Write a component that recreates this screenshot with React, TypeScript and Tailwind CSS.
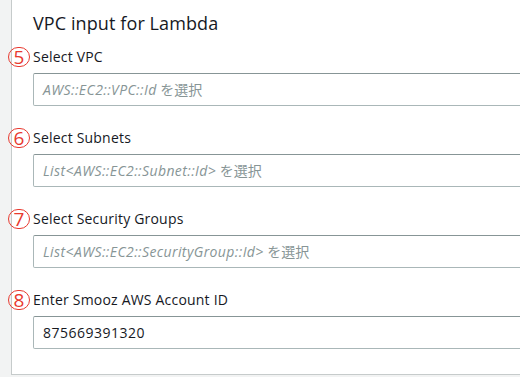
const fields: Array<{
  num: string;
  label: string;
  placeholder?: string;
  value?: string;
}> = [
  { num: "5", label: "Select VPC", placeholder: "AWS::EC2::VPC::Id" },
  {
    num: "6",
    label: "Select Subnets",
    placeholder: "List<AWS::EC2::Subnet::Id>",
  },
  {
    num: "7",
    label: "Select Security Groups",
    placeholder: "List<AWS::EC2::SecurityGroup::Id>",
  },
  { num: "8", label: "Enter Smooz AWS Account ID", value: "875669391320" },
];

export default function App() {
  return (
    <div className="flex h-[377px] w-[520px] overflow-hidden bg-[#f2f3f3] pl-[11px] font-['Open_Sans','Noto_Sans_CJK_JP',sans-serif] text-[#16191f]">
      <section className="h-[375px] w-[600px] shrink-0 border-b border-l border-[#c6cbcb] bg-white pl-[21px] pt-[11px]">
        <h2 className="text-[18px] leading-[24px] tracking-[0.1px]">VPC input for Lambda</h2>

        <div className="mt-[12px] flex flex-col gap-[22px]">
          {fields.map((f) => (
            <div key={f.num} className="flex flex-col">
              <label className="relative text-[14px] leading-[20px] tracking-[0.2px]">
                <span className="absolute -left-[25px] top-[0px] flex h-[20px] w-[22px] items-center justify-center rounded-full border border-[#e8392f] text-[19px] leading-none tracking-normal text-[#e8392f]">
                  {f.num}
                </span>
                {f.label}
              </label>
              <div className="mt-[6px] flex h-[33px] items-center rounded-[2px] border border-[#aab7b8] border-t-[#879596] px-[9px] text-[14px]">
                {f.value ? (
                  <span className="tracking-[0.5px] text-[#16191f]">{f.value}</span>
                ) : (
                  <span className="text-[#879596]">
                    <span className="italic tracking-[0.4px]">{f.placeholder}</span>
                    <span> を選択</span>
                  </span>
                )}
              </div>
            </div>
          ))}
        </div>
      </section>
    </div>
  );
}
